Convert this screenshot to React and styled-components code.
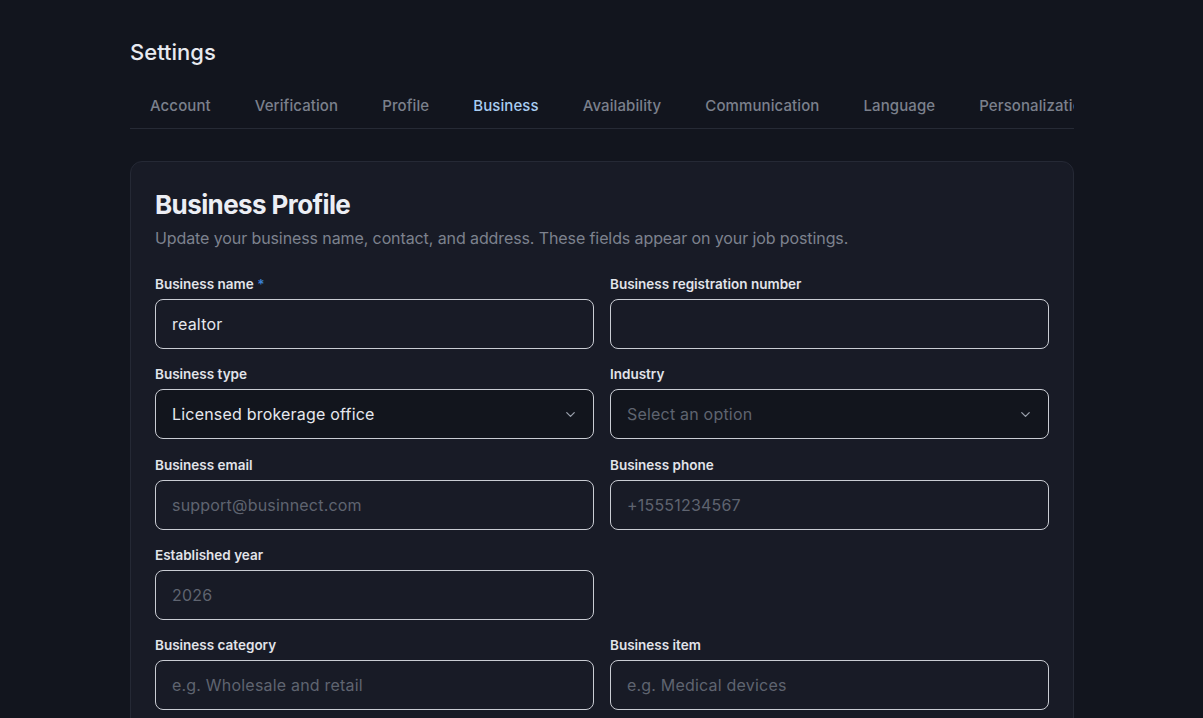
import styled, { createGlobalStyle } from "styled-components";

const GlobalStyle = createGlobalStyle`
    html, body {
        margin: 0;
        padding: 0;
        background: #12151e;
        font-family: "Inter", "Noto Sans", sans-serif;
        color: #e6e8ee;
    }
    * { box-sizing: border-box; }
`

const tabs = ["Account", "Verification", "Profile", "Business", "Availability", "Communication", "Language", "Personalization", "Notifications"]

const Chevron = () => (
    <svg width="15" height="15" viewBox="0 0 24 24" fill="none" stroke="#9aa0ac" strokeWidth="2" strokeLinecap="round" strokeLinejoin="round">
        <path d="m6 9 6 6 6-6" />
    </svg>
)

const Field = ({ label, required, value, placeholder, select }) => (
    <FieldWrap>
        <Label>
            {label}
            {required && <Star> *</Star>}
        </Label>
        <InputBox select={select ? 1 : 0}>
            {value ? <Value>{value}</Value> : <Placeholder>{placeholder}</Placeholder>}
            {select && <Chevron />}
        </InputBox>
    </FieldWrap>
)

const App = () => {
    return (
        <Page>
            <GlobalStyle />
            <Container>
                <Title>Settings</Title>
                <TabBar>
                    {tabs.map((t) => (
                        <Tab key={t} active={t === "Business" ? 1 : 0}>{t}</Tab>
                    ))}
                </TabBar>
                <Card>
                    <CardTitle>Business Profile</CardTitle>
                    <Subtitle>Update your business name, contact, and address. These fields appear on your job postings.</Subtitle>
                    <Grid>
                        <Field label="Business name" required value="realtor" />
                        <Field label="Business registration number" />
                        <Field label="Business type" value="Licensed brokerage office" select />
                        <Field label="Industry" placeholder="Select an option" select />
                        <Field label="Business email" placeholder="support@businnect.com" />
                        <Field label="Business phone" placeholder="+15551234567" />
                        <Field label="Established year" placeholder="2026" />
                        <div />
                        <Field label="Business category" placeholder="e.g. Wholesale and retail" />
                        <Field label="Business item" placeholder="e.g. Medical devices" />
                    </Grid>
                </Card>
            </Container>
        </Page>
    )
}

const Page = styled.div`
    width: 100%;
    min-height: 100vh;
    padding-top: 37px;
    display: flex;
    justify-content: center;
    overflow: hidden;
`

const Container = styled.div`
    width: 944px;
    margin-left: 1px;
`

const Title = styled.h1`
    margin: 0;
    font-size: 22px;
    line-height: 30px;
    font-weight: 500;
    color: #e8eaf0;
`

const TabBar = styled.div`
    margin-top: 14px;
    display: flex;
    gap: 4px;
    border-bottom: 1px solid #262a35;
    overflow: hidden;
    white-space: nowrap;
`

const Tab = styled.div`
    flex: none;
    padding: 1px 20px 0;
    height: 48px;
    display: flex;
    align-items: center;
    font-size: 15px;
    font-weight: 500;
    letter-spacing: 0.1px;
    color: ${(p) => (p.active ? "#a9cdf2" : "#7b808c")};
    box-shadow: ${(p) => (p.active ? "inset 0 -1px 0 #3b82d6" : "none")};
    margin-bottom: -1px;
`

const Card = styled.div`
    margin-top: 32px;
    background: #181b26;
    border: 1px solid #252935;
    border-radius: 12px;
    padding: 24px 24px 24px;
`

const CardTitle = styled.h2`
    margin: 0;
    font-size: 26px;
    line-height: 38px;
    font-weight: 700;
    letter-spacing: -0.6px;
    color: #eceef4;
`

const Subtitle = styled.p`
    margin: 2px 0 0;
    font-size: 16px;
    line-height: 24px;
    letter-spacing: -0.1px;
    color: #7d828e;
`

const Grid = styled.div`
    margin-top: 25px;
    display: grid;
    grid-template-columns: 1fr 1fr;
    column-gap: 16px;
    row-gap: 16.3px;
`

const FieldWrap = styled.div`
    display: flex;
    flex-direction: column;
`

const Label = styled.label`
    font-size: 13.5px;
    line-height: 18px;
    font-weight: 600;
    color: #e2e4ea;
    margin-bottom: 6px;
`

const Star = styled.span`
    color: #3b82d6;
`

const InputBox = styled.div`
    height: 50px;
    border: 1px solid #c9ccd3;
    border-radius: 8px;
    background: ${(p) => (p.select ? "#12151d" : "#181b26")};
    padding: 0 15px 0 16px;
    display: flex;
    align-items: center;
    justify-content: space-between;
    font-size: 16px;
    letter-spacing: 0.2px;
`

const Value = styled.span`
    color: #e6e8ee;
`

const Placeholder = styled.span`
    color: #5f6470;
`

export default App
